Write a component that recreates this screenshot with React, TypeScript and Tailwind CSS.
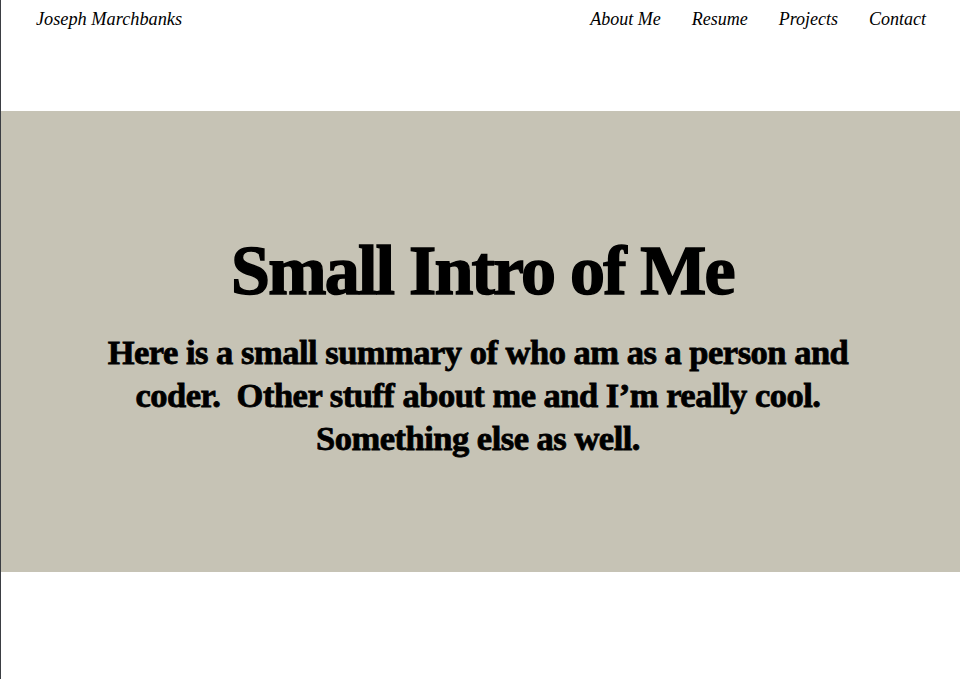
import React from 'react';

const links = ['About Me', 'Resume', 'Projects', 'Contact'];

export default function App() {
  return (
    <div className="min-h-[679px] bg-white border-l border-[#3b3e43] font-['Liberation_Serif',serif] text-black">
      <nav className="flex items-start justify-between pl-[35px] pr-[34px] pt-[8px] h-[111px]">
        <a className="italic text-[18.3px] leading-[22px]">Joseph Marchbanks</a>
        <ul className="flex gap-[31px] italic text-[18px] leading-[22px]">
          {links.map((l) => (
            <li key={l}>
              <a>{l}</a>
            </li>
          ))}
        </ul>
      </nav>

      <section className="bg-[#c6c3b5] h-[461px] flex flex-col items-center pt-[120px]">
        <h1 className="ml-[4px] text-[70px] leading-[80px] font-bold tracking-[-1.8px] [-webkit-text-stroke:1.5px_black]">
          Small Intro of Me
        </h1>
        <p className="mt-[20px] mr-[5px] w-[860px] text-center text-[34.5px] leading-[43px] font-bold tracking-[-0.5px] [-webkit-text-stroke:0.8px_black]">
          Here is a small summary of who am as a person and
          <br />
          coder.&nbsp; Other stuff about me and I’m really cool.
          <br />
          Something else as well.
        </p>
      </section>
    </div>
  );
}
